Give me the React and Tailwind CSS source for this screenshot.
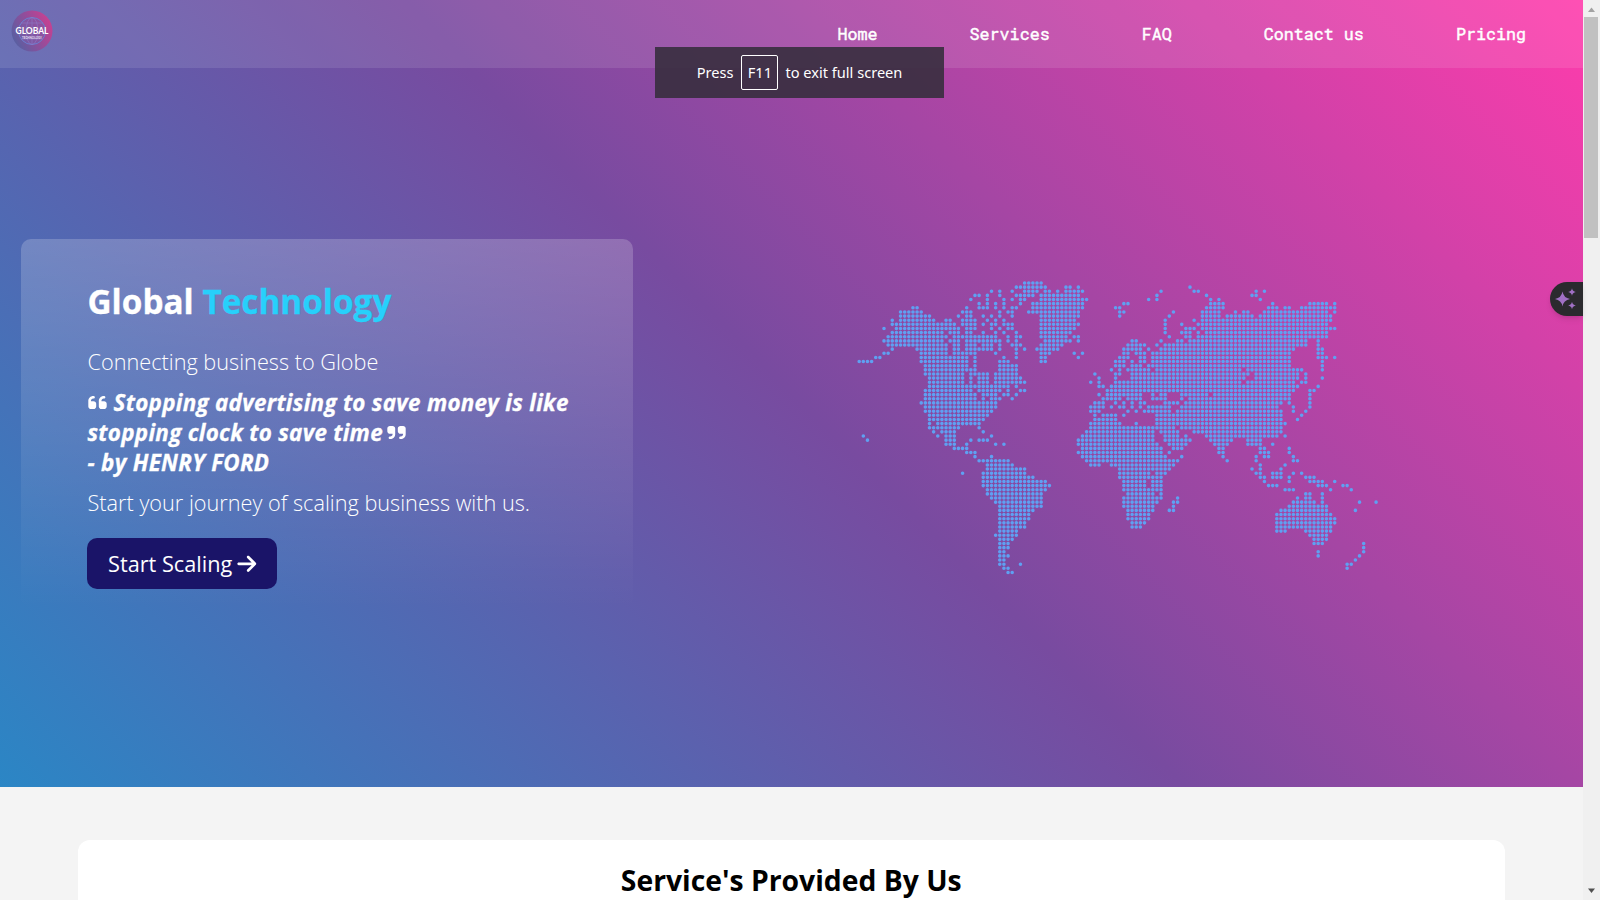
import React from "react";
import { FaQuoteLeft, FaQuoteRight, FaArrowRight } from "react-icons/fa6";

// Land cells of the dotted world map: one string per row, holding column runs.
const LAND = [
  "40-44",
  "38-45 50-51 53 80",
  "32 34 37 40-43 45-46 48 50-54 73 81-82 96 98",
  "28-29 31 34 38-42 44-53 72 84 95-96",
  "27 31 35 37 39-40 44-55 70 72 85 87 97",
  "29 31 33 35 39 42-54 64-65 85-88 100 109-113 115",
  "13-14 26 29-31 33 35 37-38 42-54 62-63 84-88 99-101 103-104 107-115",
  "10-15 25-27 34 36-37 41-53 63-64 76 83-87 91 93-94 98-113 115",
  "10-17 24 26-27 30 32 34 37 44-53 63 75 83-87 89-95 97-114",
  "8 10-18 21-22 25-28 31 33 35 44-52 74 81 83-114",
  "8-23 25-28 30 32-33 35-37 44-53 74 78 82-113",
  "6 9-24 26-28 32 34 36-37 44-52 74 79-81 83-115",
  "8-20 22-24 26-27 30 33 35 38 44-51 74 78-80 82 84-113",
  "7-21 23-33 36 38-39 44-50 52 53 75 79-80 82-110 111-113",
  "6-20 22-24 26-34 36 38 45-51 53 66-67 73 77-78 80-108 111",
  "7-12 13-21 23-24 26-28 30-32 34 37-39 44-49 65-69 72 74-108 111",
  "8 14-21 23-24 26-32 34 38 40 43-48 64-68 70 73-105 111-112",
  "6-7 15-21 23-28 33 38 44-46 52 54 64-65 67-69 71-104 111-112",
  "4-5 15-26 28 35 38 44-45 53 63-65 68-69 71-104 111-113 115",
  "0-3 15-26 28 34-36 44-45 62-64 66 68-69 71-104 112",
  "16-26 28 34-38 62-64 66-68 70-104 112",
  "16-28 34-38 61 63 65-70 72-92 94-107 112",
  "16-25 27-31 33-38 57 62-63 66-94 96-106 108",
  "17-25 27 29-31 33-39 58 62 66-93 96-106 108 112",
  "17-25 27 29-31 33-40 56 58 62-92 94-105 107-108",
  "17-27 28-36 38 58-59 61-106 111",
  "16-27 29-34 36 39-40 60-105 109-110",
  "16-28 30-33 35-36 38 58 60-68 71 73-74 78-84 86-104 109",
  "16-28 30 32-34 37 59-63 65-68 71-74 78 80-104 109",
  "15-33 57-59 62 64 66 68-69 74-77 79-102 104 109",
  "16-33 56-59 61 63-64 66 68 70-73 74-75 78-101 105 109",
  "16-32 56-58 65 67 69-71 72-75 77-102 105 108",
  "17-31 57 59-62 64 72-78 79-102 107",
  "17-30 57-62 72-102 106",
  "17 19-29 56-63 67 72-103",
  "17-24 29 56-71 72-76 78-102",
  "18 20-23 30 55-71 73-77 81-102",
  "1 19 21-23 32 54-71 74-77 79 84-101 103",
  "2 21-23 27 29-31 53-71 74-80 85-90 94-97",
  "21-23 26 33 35 53-72 75-79 86-89 94-97 100",
  "23-26 54-73 76-78 87-88 97-98 104",
  "26-28 53-73 75 87-88 97-99 104",
  "28 32 54-74 78 88 96 98-99 105",
  "29-36 55-77 89 96 105-106",
  "31-37 56-58 61-76 97 103",
  "31-40 63-75 95 97 102",
  "25 30-40 63-70 72-74 96-97 100-102 105 107",
  "30-42 63-71 72-73 97-98 100-102 104 108-110",
  "30-45 64-69 71-73 98 104 109-112 115",
  "30-46 64-69 71-73 99-101 111-113 117-118",
  "31-45 64-73 103-105 114 119",
  "31-44 65-71 73 108-109 112",
  "32-44 64-73 77 106 108-109 112",
  "33-44 64-72 76-77 105-110 112 121 125",
  "34-44 64-71 76 104-113",
  "34-42 65-71 75-76 102-113 120",
  "34-41 65-70 101-114",
  "34-41 65-70 101-115",
  "34-40 66-69 101-115",
  "34-40 66-68 101-114",
  "34-38 101-103 108-114",
  "33-38 109-113",
  "34-37 110-113",
  "34-36 110-112 122",
  "34-36 122",
  "34-35 111 122",
  "34-36 111 121",
  "34-35 120",
  "34-35 39 118-119",
  "35-36 118",
  "36-37",
];

const PITCH = 4.135;

const dots = LAND.map((row, r) =>
  row
    .split(" ")
    .map((run) => {
      const [a, b = a] = run.split("-").map(Number);
      let d = "";
      for (let c = a; c <= b; c++) {
        d += `M${(2.2 + c * PITCH).toFixed(2)} ${(3 + r * PITCH).toFixed(2)}h0`;
      }
      return d;
    })
    .join("")
).join("");

function WorldMap() {
  return (
    <svg width="522" height="296" viewBox="0 0 522 296" className="block">
      <path d={dots} stroke="#5fa0f2" strokeWidth="3.6" strokeLinecap="round" fill="none" />
    </svg>
  );
}

function Logo() {
  return (
    <svg width="42" height="42" viewBox="0 0 42 42" className="block">
      <defs>
        <linearGradient id="disc" x1="1" y1="0.2" x2="0" y2="0.75">
          <stop offset="0" stopColor="#cf3f90" />
          <stop offset="0.45" stopColor="#964c9a" />
          <stop offset="1" stopColor="#5361a2" />
        </linearGradient>
      </defs>
      <circle cx="21" cy="21" r="20.5" fill="url(#disc)" />
      <circle cx="21" cy="21" r="13.5" fill="#7a5daa" fillOpacity="0.55" stroke="#6a7fd0" strokeWidth="1" />
      <g fill="none" stroke="#8f78c8" strokeWidth="0.6">
        <ellipse cx="21" cy="21" rx="6" ry="13.5" />
        <path d="M10 13h22M10 29h22M21 7.500v27" />
      </g>
      <text x="21" y="24.300" textAnchor="middle" textLength="33" lengthAdjust="spacingAndGlyphs" fill="#fff" fontSize="9.500" fontWeight="700" fontFamily="Lato, sans-serif">GLOBAL</text>
      <text x="21" y="28.600" textAnchor="middle" textLength="20" lengthAdjust="spacingAndGlyphs" fill="#e8e0f5" fontSize="3.200" fontWeight="700" fontFamily="Lato, sans-serif">TECHNOLOGY</text>
    </svg>
  );
}

function Navbar() {
  const links = ["Home", "Services", "FAQ", "Contact us", "Pricing"];
  return (
    <header className="flex h-[67.5px] items-center justify-between bg-white/10 pr-[56.5px] pl-[11px]">
      <div className="mb-[5px]">
        <Logo />
      </div>
      <nav className="flex gap-[92px] font-['Roboto_Mono','DejaVu_Sans_Mono',monospace] text-[16.7px] leading-6 text-white [-webkit-text-stroke:0.45px_white]">
        {links.map((label) => (
          <a key={label} href="#" className="whitespace-nowrap">
            {label}
          </a>
        ))}
      </nav>
    </header>
  );
}

function FullScreenHint() {
  return (
    <div className="absolute top-[47px] left-[655px] flex h-[51px] w-[289px] items-center justify-center bg-[#392f40]/92 font-['Segoe_UI','Noto_Sans',sans-serif] text-[14.6px] text-white">
      <span>Press</span>
      <span className="mr-[7px] ml-2 flex h-[35px] w-[37px] items-center justify-center rounded-[2px] border border-white">F11</span>
      <span>to exit full screen</span>
    </div>
  );
}

function Hero() {
  return (
    <section className="flex h-[787px] flex-col bg-[linear-gradient(225deg,#ff3cac_0%,#784ba0_50%,#2b86c5_100%)]">
      <Navbar />
      <div className="flex flex-1 items-start">
        <div className="mt-[171.5px] ml-[21px] h-[370px] w-[611.5px] rounded-[10px] bg-linear-to-b from-white/20 to-transparent pt-[38px] pl-[66.5px] text-[21.7px] text-white">
          <h1 className="text-[33.3px] leading-[48px] font-bold [-webkit-text-stroke:0.3px_currentColor]">
            Global <span className="text-[#27d0fb]">Technology</span>
          </h1>
          <p className="mt-[22px] leading-[30px] font-light">Connecting business to Globe</p>
          <p className="mt-[11px] text-[22.4px] leading-[30px] font-bold tracking-[0.28px] whitespace-nowrap italic [-webkit-text-stroke:0.3px_white]">
            <FaQuoteLeft className="-ml-px inline-block align-[-2px] text-[21px]" /> Stopping advertising to save money is like
            <br />
            stopping clock to save time
            <FaQuoteRight className="ml-[3px] inline-block align-[-2px] text-[21px]" />
            <br />- by HENRY FORD
          </p>
          <p className="mt-[10px] leading-[30px] font-light">Start your journey of scaling business with us.</p>
          <button className="-ml-[0.5px] mt-[20px] flex h-[51px] w-[190px] items-center justify-center gap-[4px] rounded-[10px] bg-[#1a1468] pt-px pl-[2px] whitespace-nowrap">
            Start Scaling
            <FaArrowRight className="text-[21.6px]" />
          </button>
        </div>
        <div className="mt-[212.500px] ml-[224.5px]">
          <WorldMap />
        </div>
      </div>
    </section>
  );
}

function Services() {
  return (
    <section className="flex-1 overflow-hidden bg-[#f4f4f4] px-[78px] pt-[53px]">
      <div className="h-[120px] rounded-[12px] bg-white pt-[20px] text-center">
        <h2 className="text-[28.3px] leading-[40px] font-bold text-black">Service's Provided By Us</h2>
      </div>
    </section>
  );
}

function SparkleTab() {
  return (
    <div className="absolute top-[282px] left-[1549.5px] flex h-[34px] w-[33px] items-center rounded-l-full bg-[#2b2a2e] pl-[4px] shadow-md">
      <svg width="24" height="24" viewBox="0 0 24 24" fill="#a070c4">
        <path d="M8.500 4.500Q9.600 10.900 16 12Q9.600 13.100 8.500 19.500Q7.400 13.100 1 12Q7.400 10.900 8.500 4.500Z" />
        <path d="M18 1.200Q18.600 4.400 21.800 5Q18.600 5.600 18 8.800Q17.400 5.600 14.200 5Q17.400 4.400 18 1.200Z" />
        <path d="M18 14.700Q18.600 17.900 21.800 18.500Q18.600 19.100 18 22.300Q17.400 19.100 14.200 18.500Q17.400 17.900 18 14.700Z" />
      </svg>
    </div>
  );
}

function Scrollbar() {
  return (
    <div className="flex w-[17.500px] flex-col items-center bg-[#f0f0f0]">
      <svg width="17" height="17" viewBox="0 0 17 17" className="block shrink-0">
        <path d="M5 12h7L8.500 7.500z" fill="#a3a3a3" />
      </svg>
      <div className="h-[221px] w-[14px] bg-[#c1c1c1]" />
      <svg width="17" height="17" viewBox="0 0 17 17" className="mt-auto block shrink-0">
        <path d="M5 5.500h7L8.500 10z" fill="#505050" />
      </svg>
    </div>
  );
}

export default function App() {
  return (
    <div className="relative flex h-[900px] w-[1600px] overflow-hidden font-['Open_Sans',sans-serif]">
      <main className="flex w-[1582.5px] flex-col">
        <Hero />
        <Services />
      </main>
      <Scrollbar />
      <FullScreenHint />
      <SparkleTab />
    </div>
  );
}
